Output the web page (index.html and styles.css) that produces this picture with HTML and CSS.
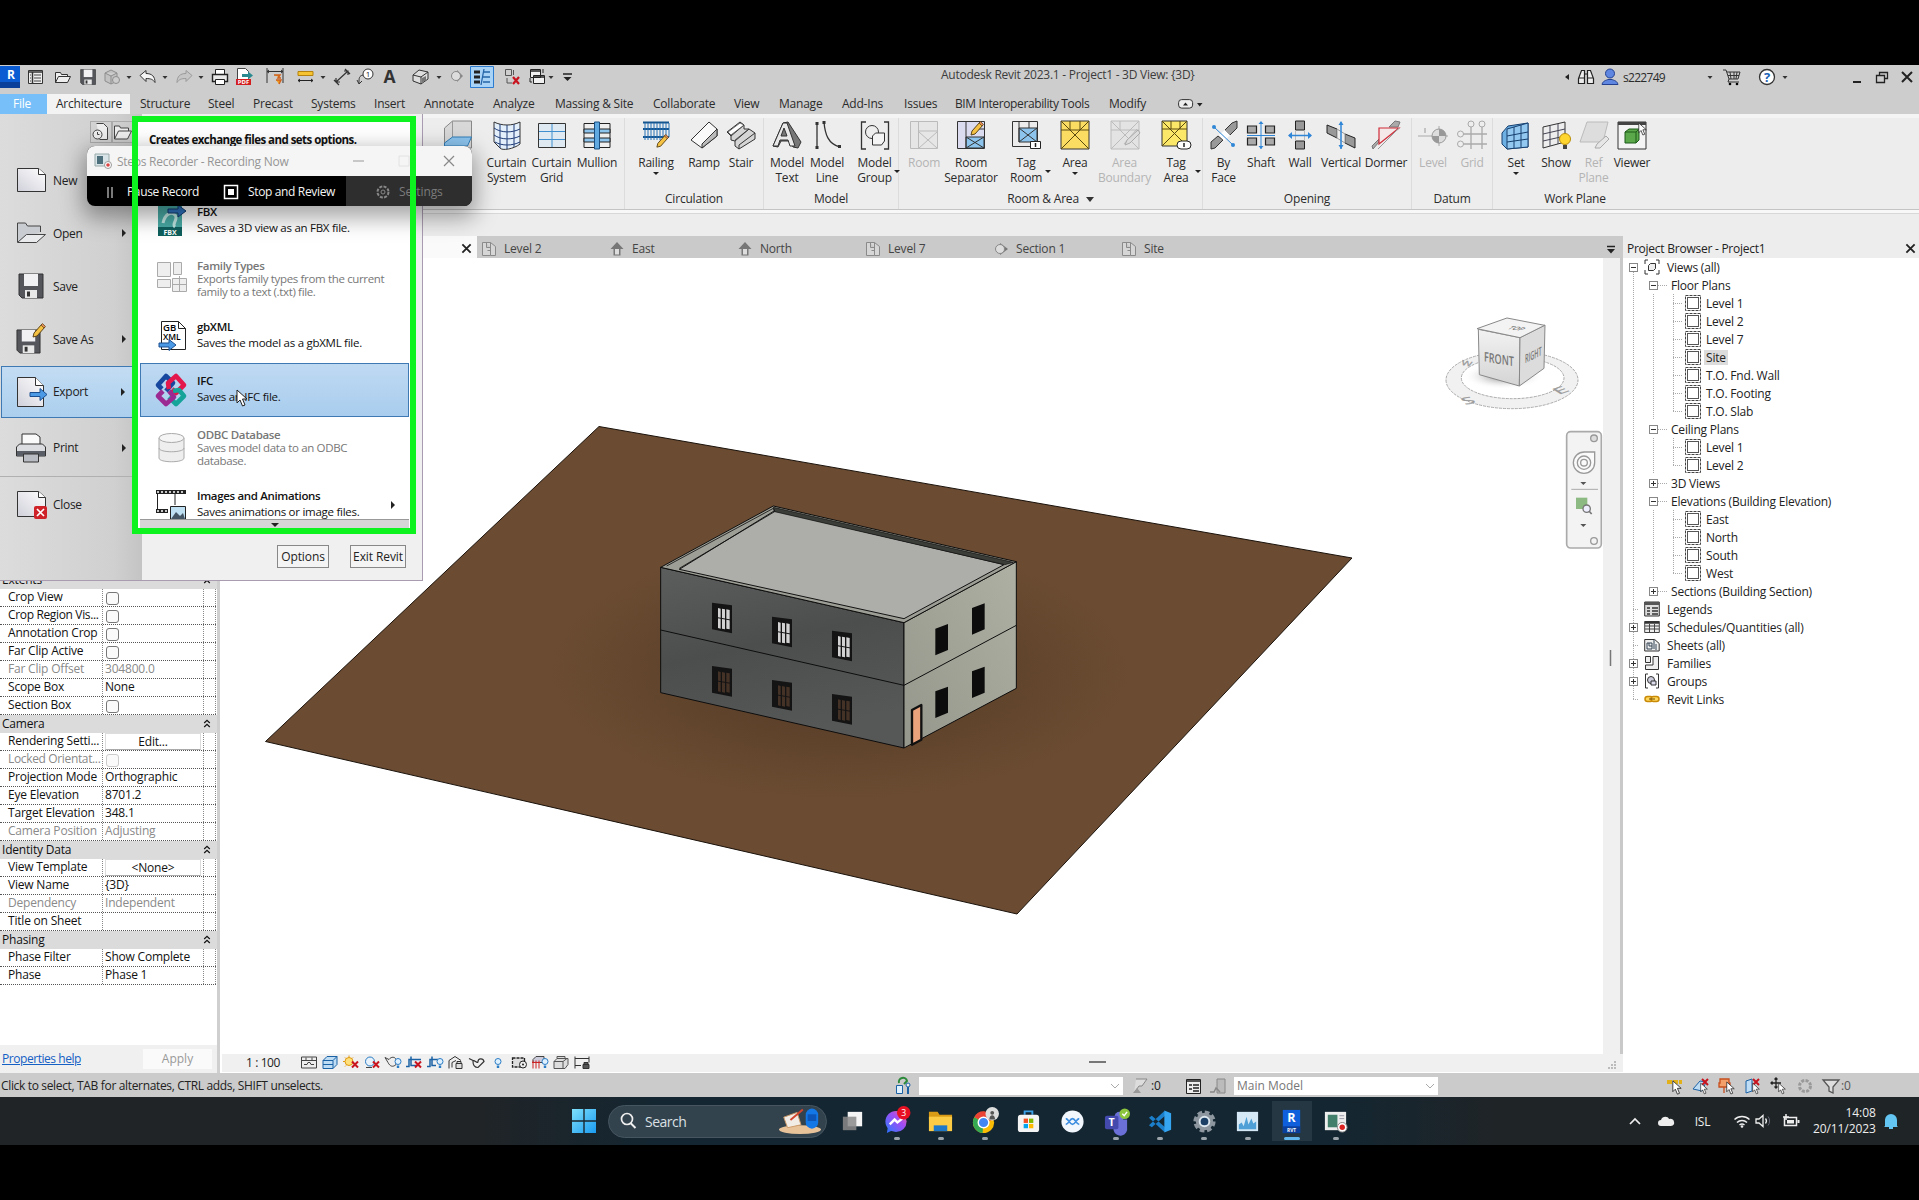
FILE: index.html
```html
<!DOCTYPE html>
<html lang="en">
<head>
<meta charset="utf-8">
<title>Autodesk Revit 2023.1 - Project1 - 3D View: {3D}</title>
<link rel="stylesheet" href="styles.css">
</head>
<body>
<svg class="defs" width="0" height="0">
  <symbol id="caret" viewBox="0 0 8 8"><path d="M1.5 3h5L4 6z" fill="#333"/></symbol>
  <symbol id="plan" viewBox="0 0 16 16"><path d="M1.500 1.500h8v13h-8zM9.500 1.500l5 4v9h-5M5.500 2v4.500h4M9.500 9.500h-3" fill="#d6d6d6" stroke="#8a8a8a"/></symbol>
  <symbol id="house" viewBox="0 0 16 16"><path d="M8 1L1.500 8H4.500v6.500h7V8h3z" fill="#777"/><path d="M6 8h4v5.500H6z" fill="#ddd"/></symbol>
  <symbol id="view" viewBox="0 0 16 16"><rect x=".5" y=".5" width="15" height="15" fill="none" stroke="#444" stroke-dasharray="3 1"/><rect x="2.500" y="2.500" width="11" height="11" fill="#fff" stroke="#555"/></symbol>
  <symbol id="minus" viewBox="0 0 9 9"><rect x=".5" y=".5" width="8" height="8" fill="#fff" stroke="#888"/><path d="M2 4.5h5" stroke="#333"/></symbol>
  <symbol id="plus" viewBox="0 0 9 9"><rect x=".5" y=".5" width="8" height="8" fill="#fff" stroke="#888"/><path d="M2 4.5h5M4.5 2v5" stroke="#333"/></symbol>
  <symbol id="chev" viewBox="0 0 8 9"><path d="M1.2 4L4 1.3 6.800 4M1.200 8L4 5.300 6.800 8" fill="none" stroke="#111" stroke-width="1.200"/></symbol>
  <symbol id="x" viewBox="0 0 12 12"><path d="M1.500 1.500l9 9M10.500 1.500l-9 9" stroke="#222" stroke-width="2"/></symbol>
  <symbol id="redx" viewBox="0 0 8 8"><path d="M1 1l6 6M7 1L1 7" stroke="#c8141e" stroke-width="2"/></symbol>
  <symbol id="pencil" viewBox="0 0 16 16"><path d="M2 14l1-4 8-9 3 3-8 9z" fill="#f6c244" stroke="#5a4318"/><path d="M10 2l3 3 1.500-1.500-3-3z" fill="#e08a55" stroke="#5a4318" stroke-width=".7"/></symbol>
  <symbol id="floppy" viewBox="0 0 26 26"><path d="M1 1h24v24H4l-3-3z" fill="#54565c" stroke="#333"/><path d="M6 1h14v12H6z" fill="#f1f1f4"/><path d="M7 17h12v8H7z" fill="#e8e8e8"/><path d="M9 18.500h3v5H9z" fill="#333"/></symbol>
  <symbol id="ptr" viewBox="0 0 12 18"><path d="M1 1v13l3-3 2.500 6 2.500-1-2.500-6h4.500z" fill="#fff" stroke="#222"/></symbol>
  <symbol id="bulb" viewBox="0 0 8 12"><circle cx="4" cy="4" r="3" fill="#dff0ff" stroke="#2a7cc4"/><path d="M2.800 8h2.400v2.500H2.800z" fill="#2a7cc4"/></symbol>
</svg>

<div class="screen">
  <header class="title">
    <div class="qat">
      <svg class="logo" viewBox="0 0 20 22"><path d="M0 0h20v22H0z" fill="#0b5bd3"/><path d="M0 16h20v6H0z" fill="#0a3f9a"/><text x="11" y="13" font-size="12" font-weight="bold" fill="#fff" text-anchor="middle">R</text></svg>
      <svg viewBox="0 0 22 22"><path d="M4.500 4.500h14v13h-14z" fill="#eee" stroke="#333"/><path d="M4.500 6h14M8.500 6v12" stroke="#333" stroke-width="1.500"/><path d="M10 9h7M10 12h7M10 15h7M6 9h1M6 12h1M6 15h1" stroke="#444"/></svg>
      <svg viewBox="0 0 22 22"><path d="M3.500 16.500v-10h5l1 2h6v2M3.500 16.500l3-6h12l-3 6z" fill="#eee" stroke="#333"/></svg>
      <svg viewBox="0 0 22 22"><g transform="translate(3 3) scale(.62)"><use href="#floppy" width="26" height="26"/></g></svg>
      <svg viewBox="0 0 22 22"><path d="M4 7l6-3 6 3v8l-6 3-6-3zM4 7l6 3 6-3M10 10v8" fill="#c2c2c2" stroke="#8d8d8d"/><circle cx="15" cy="14" r="3.500" fill="#ccc" stroke="#8d8d8d"/></svg>
      <svg class="cr"><use href="#caret"/></svg>
      <svg viewBox="0 0 22 22"><path d="M3 9.500l6-5v3c6 0 9 3 9 9-2-3-4-4-9-4v3z" fill="#f4f4f4" stroke="#333"/></svg>
      <svg class="cr"><use href="#caret"/></svg>
      <svg viewBox="0 0 22 22"><path d="M19 9.500l-6-5v3c-6 0-9 3-9 9 2-3 4-4 9-4v3z" fill="#c6c6c6" stroke="#9a9a9a"/></svg>
      <svg class="cr"><use href="#caret"/></svg>
      <svg viewBox="0 0 22 22"><path d="M6.500 9V3.500h9V9" fill="#fff" stroke="#222"/><path d="M3.500 8.500h15v7h-15z" fill="#e8e8e8" stroke="#222" stroke-width="1.400"/><path d="M6.500 13.500h9v5h-9z" fill="#fff" stroke="#222"/></svg>
      <svg viewBox="0 0 22 22"><path d="M3.500 2.500h8l3 3v12h-11z" fill="#fff" stroke="#444"/><path d="M8 8h6V5.500l5 4-5 4V11H8z" fill="#2b8a8f"/><path d="M2 13h15v6H2z" fill="#d21e1e"/><text x="9.500" y="18.300" font-size="6" font-weight="bold" fill="#fff" text-anchor="middle">PDF</text></svg>
      <svg viewBox="0 0 22 22"><path d="M3 2v15M19 2v15M3 5.500h16M5 4l-2 1.500L5 7M17 4l2 1.500L17 7" fill="none" stroke="#333"/><path d="M10 9h6l-2 3h3M12 14h5l-2 4" fill="#f0a020" stroke="#d0621e" stroke-width="1.500"/></svg>
      <svg viewBox="0 0 22 22"><path d="M3 5.500h15v4H3z" fill="#f7c431" stroke="#b5820f"/><path d="M3 14.500h15M5 13l-2 1.500L5 16M16 13l2 1.500-2 1.500" fill="none" stroke="#222"/></svg>
      <svg class="cr"><use href="#caret"/></svg>
      <svg viewBox="0 0 22 22"><path d="M5 16L17 5M3 14l5 5M14 3l5 5M5 12v4h4M13 5h4v4" fill="none" stroke="#333" stroke-width="1.200"/></svg>
      <svg viewBox="0 0 22 22"><circle cx="13" cy="8" r="5" fill="#fff" stroke="#333"/><text x="13" y="11" font-size="8" text-anchor="middle" fill="#222">1</text><path d="M8 9c-4 1-4 3-4 8M2 14l2 4 3-3" fill="none" stroke="#333"/></svg>
      <svg viewBox="0 0 22 22"><text x="10.500" y="17" font-size="17.500" font-weight="bold" fill="#333" text-anchor="middle">A</text></svg>
      <svg viewBox="0 0 22 22"><path d="M3 9l6-5 9 2v7l-7 5-8-3z" fill="#ddd" stroke="#333"/><path d="M3 9l8 2 7-5M11 11v7" fill="none" stroke="#333"/><path d="M12 12l4-2v4l-4 3z" fill="#777"/></svg>
      <svg class="cr"><use href="#caret"/></svg>
      <svg viewBox="0 0 22 22"><path d="M12 4l6 6-6 6z" fill="#888"/><circle cx="11" cy="10" r="4.500" fill="#ddd" stroke="#888"/></svg>
      <svg class="on" viewBox="0 0 24 22"><path d="M.5.5h23v21H.5z" fill="#a9d2f7" stroke="#2b7bd0"/><path d="M4 6h6M4 11h6M4 16h6" stroke="#222" stroke-width="3"/><path d="M13 6h7M13 11h7M13 16h7M14 3l-3 16" stroke="#2565a8" stroke-width="1.300"/></svg>
      <svg viewBox="0 0 22 22"><path d="M4.500 3.500h6v6h-6zM12.500 4v5M6 12v5h5" fill="none" stroke="#555"/><path d="M12 11l6 7M18 11l-6 7" stroke="#c8141e" stroke-width="2.200"/></svg>
      <svg viewBox="0 0 22 22"><path d="M4.500 3.500h10v8h-10zM7.500 9.500h11v8h-11z" fill="#f0f0f0" stroke="#222"/><path d="M4.500 5h10M7.500 11h11" stroke="#222" stroke-width="1.600"/><path d="M4 12v4h2M17 3v4" fill="none" stroke="#222"/></svg>
      <svg class="cr"><use href="#caret"/></svg>
      <svg class="q" viewBox="0 0 16 22"><path d="M3 8h9" stroke="#222" stroke-width="1.500"/><path d="M3.500 11h8l-4 4z" fill="#222"/></svg>
    </div>
    <div class="wtitle">Autodesk Revit 2023.1 - Project1 - 3D View: {3D}</div>
    <div class="tools">
      <svg viewBox="0 0 22 22"><path d="M13 8v6l-4-3z" fill="#222"/></svg>
      <svg viewBox="0 0 22 22"><path d="M3.500 17.500v-5l3-8h3v13zM18.500 17.500v-5l-3-8h-3v13zM9.500 8h3M3.500 12h6M12.500 12h6" fill="#eee" stroke="#222" stroke-width="1.200"/></svg>
      <svg viewBox="0 0 22 22"><circle cx="11" cy="7.500" r="4.500" fill="#5f86e0" stroke="#23418e"/><path d="M3 18.500c1-4 4-4 6-5h4c2 1 5 1 6 5z" fill="#5f86e0" stroke="#23418e"/></svg>
      <span>s222749</span>
      <svg class="cr"><use href="#caret"/></svg>
      <svg viewBox="0 0 22 22"><path d="M2 4h3l3 9h9l2-7H6M8 13l-1 3h11M9 6l1 7M13 6v7M16 6l-1 7M7 9.500h11" fill="none" stroke="#333"/><circle cx="9" cy="18" r="1.300"/><circle cx="16" cy="18" r="1.300"/></svg>
      <svg viewBox="0 0 22 22"><circle cx="11" cy="11" r="7.500" fill="#fff" stroke="#333" stroke-width="1.300"/><text x="11" y="15.500" font-size="13" font-weight="bold" fill="#1b62b5" text-anchor="middle">?</text></svg>
      <svg class="cr"><use href="#caret"/></svg>
      <svg viewBox="0 0 22 22"><path d="M7 16h8" stroke="#222" stroke-width="2"/></svg>
      <svg viewBox="0 0 22 22"><path d="M8.500 9V6.500h8v6H14M5.500 9.500h8v7h-8z" fill="none" stroke="#222" stroke-width="1.300"/></svg>
      <svg viewBox="0 0 22 22"><path d="M6 6l10 10M16 6L6 16" stroke="#222" stroke-width="2"/></svg>
    </div>
  </header>

  <nav class="tabs">
    <span class="file">File</span><span class="act">Architecture</span><span>Structure</span><span>Steel</span><span>Precast</span><span>Systems</span><span>Insert</span><span>Annotate</span><span>Analyze</span><span>Massing &amp; Site</span><span>Collaborate</span><span>View</span><span>Manage</span><span>Add-Ins</span><span>Issues</span><span class="bim">BIM Interoperability Tools</span><span>Modify</span>
    <svg viewBox="0 0 26 12" width="26" height="12"><rect x=".6" y="1.600" width="14" height="8.500" rx="3" fill="#eee" stroke="#333"/><path d="M5 7.500h5L7.500 4.500zM19 5h5.500l-2.750 3.500z" fill="#222"/></svg>
  </nav>

  <section class="ribbon">
    <div class="panel p0"><div class="items">
      <div class="it"><svg viewBox="0 0 30 30"><path d="M1.500 8l8-7h19v27h-19l-8-2z" fill="#d8d8d8" stroke="#888"/><path d="M9.500 1v18" stroke="#999"/><path d="M1.500 23l8-6h19l-4 9H1.500z" fill="#8cc4ee" stroke="#2f7db8"/></svg></div>
      <div class="it"><svg viewBox="0 0 30 30"><path d="M2 2c8 4 18 4 26 0v22c-6 5-18 7-20 4L2 22z" fill="#e3effa" stroke="#333"/><path d="M2 8c7 5 18 5 26 1M2 15c7 5 18 5 26 1M3 22c7 4 17 4 25 0M8 4v24M15 5v24M22 4v23" fill="none" stroke="#1f3c78"/></svg>Curtain<br>System</div>
      <div class="it"><svg viewBox="0 0 30 30"><path d="M1.500 3.500h27v24h-27z" fill="#dfe9f2" stroke="#333"/><path d="M2 11.500h26M2 19.500h26M15 4v23" stroke="#3f8fd0"/></svg>Curtain<br>Grid</div>
      <div class="it"><svg viewBox="0 0 30 30"><path d="M2 3.500h26v24H2z" fill="#eee" stroke="#222"/><path d="M2 9h26v4H2zM2 18h26v4H2z" fill="#8cc4ee" stroke="#222"/><path d="M12.500 2h5v27h-5z" fill="#5fa8e0" stroke="#1b4e80"/></svg>Mullion</div>
    </div><div class="ptitle"></div></div>
    <div class="panel p1"><div class="items">
      <div class="it"><svg viewBox="0 0 30 30"><path d="M2 2.500h26M2 9h26M2 17h26" stroke="#14548f" stroke-width="2"/><path d="M4 3v17M7 3v17M10 3v17M13 3v17M16 3v17M19 3v17M22 3v14M25 3v14M28 3v14" stroke="#2471b5"/><use href="#pencil" x="14" y="14" width="15" height="15"/></svg>Railing<br><i class="dn"></i></div>
      <div class="it"><svg viewBox="0 0 30 30"><path d="M2 20L20 2l8 7v7L13 28z" fill="#fafafa" stroke="#333"/><path d="M13 28v-4L28 9v7z" fill="#bbb" stroke="#333"/></svg>Ramp</div>
      <div class="it"><svg viewBox="0 0 30 30"><path d="M1 12L14 2l4 3v4l5 0 6 4v6L13 29l-4-3v-5l-4-1v-4z" fill="#d5d5d5" stroke="#333"/><path d="M5 16L18 5M9 21l14-12M13 25L29 13M13 25v4" stroke="#333"/><path d="M2 12L14 3l4 2L5 15zM9 20l14-11" fill="#fff" stroke="#333" stroke-width=".7"/></svg>Stair</div>
    </div><div class="ptitle">Circulation</div></div>
    <div class="panel p2"><div class="items">
      <div class="it"><svg viewBox="0 0 30 30"><path d="M1 26L11 3l5-1 13 20-3 6-5-1-3-6H9l-3 6z" fill="#777" stroke="#333"/><path d="M1 26L11 3h4l8 23h-5l-2-6H8l-2 6zM9 16h6l-3-8z" fill="#e9e9e9" stroke="#333"/></svg>Model<br>Text</div>
      <div class="it"><svg viewBox="0 0 30 30"><path d="M5 3v25M12 2c1 12 4 22 16 25" fill="none" stroke="#333" stroke-width="1.300"/><path d="M3.500 2h3v3h-3zM3.500 26h3v3h-3zM10.500 1h3v3h-3zM26 25h3v3h-3z" fill="#333"/></svg>Model<br>Line</div>
      <div class="it"><svg viewBox="0 0 30 30"><path d="M6 2H1.500v27H6M24 2h4.500v27H24" fill="none" stroke="#333" stroke-width="1.300"/><circle cx="12" cy="12" r="6.500" fill="#eee" stroke="#333"/><path d="M12.500 16l3-3h9v8l-3 4h-9z" fill="#f4f4f4" stroke="#333"/></svg>Model<br>Group<b class="sd"></b></div>
    </div><div class="ptitle">Model</div></div>
    <div class="panel p3"><div class="items">
      <div class="it off"><svg viewBox="0 0 30 30"><path d="M1.500 1.500h27v27h-27zM9.500 1.500v27M9.500 11h19M10 12l18 16M28 12L10 28" fill="#e6e6e6" stroke="#bbb"/></svg>Room</div>
      <div class="it"><svg viewBox="0 0 30 30"><path d="M1.500 1.500h27v27h-27z" fill="#dcdcf0" stroke="#333"/><path d="M10 17h18v11H10z" fill="#8cc4ee" stroke="#333"/><path d="M10 2v26M10 17l18 11M28 17L10 28M18 9h10" stroke="#333"/><use href="#pencil" x="13" y="1" width="16" height="16"/></svg>Room<br>Separator</div>
      <div class="it"><svg viewBox="0 0 30 30"><path d="M1.500 1.500h25v25h-25z" fill="#ececec" stroke="#333"/><path d="M8 8h18v14H8z" fill="#8cc4ee" stroke="#333"/><path d="M8 1v21M8 8l18 14M26 8L8 22M18 1v7" stroke="#333"/><path d="M19.500 21.500h10v7h-10z" fill="#fff" stroke="#222"/><path d="M24.500 23v4" stroke="#222" stroke-width="1.500"/></svg>Tag<br>Room<b class="sd"></b></div>
      <div class="it"><svg viewBox="0 0 30 30"><path d="M1 1h28v28H1z" fill="#fbdc62" stroke="#333"/><path d="M1 1l28 28M29 1L1 29M1 10h28M10 1v9M20 1v9" stroke="#5a4a10"/></svg>Area<br><i class="dn"></i></div>
      <div class="it off"><svg viewBox="0 0 30 30"><path d="M1 1h28v28H1z" fill="#e3e3e3" stroke="#bbb"/><path d="M1 1l28 28M29 1L1 29M1 10h28M10 1v9M27 9L14 24" stroke="#bbb"/><path d="M15 25l2-5 11-10 2 3-10 10z" fill="#ddd" stroke="#aaa"/></svg>Area<br>Boundary</div>
      <div class="it"><svg viewBox="0 0 30 30"><path d="M1 1h25v25H1z" fill="#fbe768" stroke="#333"/><path d="M1 1l25 25M26 1L1 26M1 9h25M10 1v8M19 1v8" stroke="#5a4a10"/><rect x="16" y="21" width="14" height="8" rx="4" fill="#fff" stroke="#222"/><path d="M23 23v4" stroke="#222" stroke-width="1.500"/></svg>Tag<br>Area<b class="sd"></b></div>
    </div><div class="ptitle">Room &amp; Area&nbsp; <svg width="8" height="8" viewBox="0 0 8 8"><path d="M0 2h8L4 7z" fill="#333"/></svg></div></div>
    <div class="panel p4"><div class="items">
      <div class="it"><svg viewBox="0 0 30 30"><path d="M16 10l7-7 5-2v7l-7 7zM2 22l7-6 5 4-8 8-4 1z" fill="#999" stroke="#333"/><path d="M10 15l6-5 5 5-6 6z" fill="#fff"/><path d="M5 7l19 18" stroke="#2f86d6"/><circle cx="5" cy="7" r="2" fill="#2f86d6"/><circle cx="24" cy="25" r="2" fill="#2f86d6"/></svg>By<br>Face</div>
      <div class="it"><svg viewBox="0 0 30 30"><path d="M1.500 6h9v7h-9zM19.500 6h9v7h-9zM1.500 18h9v7h-9zM19.500 18h9v7h-9z" fill="#aaa" stroke="#222" stroke-width="1.200"/><path d="M15 2v27M1 15.500h28" stroke="#2f86d6"/><path d="M12.500 4L15 1l2.500 3zM12.500 26l2.500 3 2.500-3z" fill="#2f86d6"/></svg>Shaft</div>
      <div class="it"><svg viewBox="0 0 30 30"><path d="M10.500 1h9v9h-9zM10.500 21h9v8h-9z" fill="#999" stroke="#222"/><path d="M10.500 10v11M19.500 10v11" stroke="#bbb"/><path d="M4 15.500h22" stroke="#2f86d6" stroke-width="1.500"/><path d="M7 12l-4 3.500L7 19zM23 12l4 3.500-4 3.500z" fill="#2f86d6"/></svg>Wall</div>
      <div class="it"><svg viewBox="0 0 30 30"><path d="M1 5l10 4v9L1 13zM19 14l10 4v10l-10-5z" fill="#999" stroke="#222"/><path d="M11 9l8 5v9l-8-5z" fill="#eee" stroke="#999"/><path d="M15 2v27" stroke="#2f86d6" stroke-width="1.500"/><path d="M12.500 5L15 1l2.500 4zM12.500 25l2.500 4 2.500-4z" fill="#2f86d6"/></svg>Vertical</div>
      <div class="it"><svg viewBox="0 0 30 30"><path d="M18 7l6-6 5 1-2 5zM1 26l7-7v3l-6 7z" fill="#aaa" stroke="#777"/><path d="M8 24V8h20z" fill="#f4e8e8" stroke="#cf2b37" stroke-width="1.200"/><path d="M28 8L7 29" stroke="#999"/></svg>Dormer</div>
    </div><div class="ptitle">Opening</div></div>
    <div class="panel p5"><div class="items">
      <div class="it off"><svg viewBox="0 0 30 30"><path d="M0 16h30M21 6v20" stroke="#aaa"/><circle cx="21" cy="16" r="7" fill="#ddd" stroke="#999"/><path d="M21 16V9a7 7 0 017 7zM21 16v7a7 7 0 01-7-7z" fill="#999"/><path d="M7 8v5" stroke="#999"/></svg>Level</div>
      <div class="it off"><svg viewBox="0 0 30 30"><path d="M4 14h26M4 24h26M14 7v22M25 7v22" stroke="#aaa" stroke-width="1.300"/><g fill="#eee" stroke="#aaa"><circle cx="14" cy="4" r="3"/><circle cx="25" cy="4" r="3"/><circle cx="3.500" cy="14" r="3"/><circle cx="3.500" cy="24" r="3"/></g></svg>Grid</div>
    </div><div class="ptitle">Datum</div></div>
    <div class="panel p6"><div class="items">
      <div class="it"><svg viewBox="0 0 30 30"><path d="M1 13l6-7 20-3v24L6 29l-5-5z" fill="#6db0e4" stroke="#163f6e"/><path d="M6 9l21-6v24L6 29z" fill="#93c9f1" stroke="#163f6e"/><path d="M6 16l21-4M6 22l21-3M13 7v21M20 5v22" stroke="#163f6e"/></svg>Set<br><i class="dn"></i></div>
      <div class="it"><svg viewBox="0 0 30 30"><path d="M2 7l22-5v20L2 28z" fill="#eee" stroke="#333"/><path d="M2 14l22-5M2 21l22-5M9 6v20M17 4v20" stroke="#445"/><circle cx="24" cy="19" r="5.500" fill="#ffd530" stroke="#b98d0a"/><path d="M22 25h4v4h-4z" fill="#444"/></svg>Show</div>
      <div class="it off"><svg viewBox="0 0 30 30"><path d="M8 2h21l-5 20H1z" fill="#ddd" stroke="#bbb"/><path d="M16 28l2-4 9-8 3 3-9 9z" fill="#e6e6e6" stroke="#aaa"/></svg>Ref<br>Plane</div>
      <div class="it"><svg viewBox="0 0 30 30"><path d="M1 2h28v27H1z" fill="#f4f4f4" stroke="#333"/><path d="M1 2h28v3H1z" fill="#444"/><path d="M8 12l4-3h10v11l-3 3H8z" fill="#5aa84a" stroke="#1d5a18"/><path d="M8 12h11v11M19 12l3-3" fill="none" stroke="#1d5a18"/><use href="#ptr" x="21" y="2" width="9" height="14"/></svg>Viewer</div>
    </div><div class="ptitle">Work Plane</div></div>
  </section>
  <div class="options"></div>

  <main class="main">
    <aside class="props">
      <div class="fill"></div>
      <div class="ph">Extents<svg><use href="#chev"/></svg></div>
      <div class="pr"><span>Crop View</span><span><i class="cb"></i></span><span></span></div>
      <div class="pr tight"><span>Crop Region Vis...</span><span><i class="cb"></i></span><span></span></div>
      <div class="pr"><span>Annotation Crop</span><span><i class="cb"></i></span><span></span></div>
      <div class="pr"><span>Far Clip Active</span><span><i class="cb"></i></span><span></span></div>
      <div class="pr dim"><span>Far Clip Offset</span><span>304800.0</span><span></span></div>
      <div class="pr"><span>Scope Box</span><span>None</span><span></span></div>
      <div class="pr"><span>Section Box</span><span><i class="cb"></i></span><span></span></div>
      <div class="ph">Camera<svg><use href="#chev"/></svg></div>
      <div class="pr"><span>Rendering Setti...</span><span><i class="btn">Edit...</i></span><span></span></div>
      <div class="pr dim tight"><span>Locked Orientat...</span><span><i class="cb"></i></span><span></span></div>
      <div class="pr"><span>Projection Mode</span><span>Orthographic</span><span></span></div>
      <div class="pr"><span>Eye Elevation</span><span>8701.2</span><span></span></div>
      <div class="pr"><span>Target Elevation</span><span>348.1</span><span></span></div>
      <div class="pr dim"><span>Camera Position</span><span>Adjusting</span><span></span></div>
      <div class="ph">Identity Data<svg><use href="#chev"/></svg></div>
      <div class="pr"><span>View Template</span><span><i class="btn">&lt;None&gt;</i></span><span></span></div>
      <div class="pr"><span>View Name</span><span>{3D}</span><span></span></div>
      <div class="pr dim"><span>Dependency</span><span>Independent</span><span></span></div>
      <div class="pr"><span>Title on Sheet</span><span></span><span></span></div>
      <div class="ph">Phasing<svg><use href="#chev"/></svg></div>
      <div class="pr"><span>Phase Filter</span><span>Show Complete</span><span></span></div>
      <div class="pr"><span>Phase</span><span>Phase 1</span><span></span></div>
      <div class="pfoot"><a>Properties help</a><span>Apply</span></div>
    </aside>

    <section class="view">
      <div class="vtabs">
        <div class="cur"><svg><use href="#x"/></svg></div>
        <div><svg><use href="#plan"/></svg>Level 2</div>
        <div><svg><use href="#house"/></svg>East</div>
        <div><svg><use href="#house"/></svg>North</div>
        <div><svg><use href="#plan"/></svg>Level 7</div>
        <div><svg viewBox="0 0 16 16"><path d="M7 2l8 6-8 6z" fill="#777"/><circle cx="7" cy="8" r="4.500" fill="#ddd" stroke="#888"/></svg>Section 1</div>
        <div><svg><use href="#plan"/></svg>Site</div>
        <svg class="more" viewBox="0 0 10 10"><path d="M1 1.500h8" stroke="#222" stroke-width="1.500"/><path d="M1 4h8L5 8.500z" fill="#222"/></svg>
      </div>
      <svg class="canvas" viewBox="220 258 1403 796" width="1403" height="796">
        <defs>
          <radialGradient id="gr" gradientUnits="userSpaceOnUse" cx="0" cy="0" r="1" gradientTransform="translate(840 670) scale(290 130)"><stop offset="0" stop-color="#543823"/><stop offset=".6" stop-color="#61442c"/><stop offset="1" stop-color="#6b4c33"/></radialGradient>
          <linearGradient id="wl" x1="0" y1="0" x2=".3" y2="1"><stop offset="0" stop-color="#5c5e5e"/><stop offset=".5" stop-color="#4c4d4d"/><stop offset="1" stop-color="#565757"/></linearGradient>
          <linearGradient id="wr" x1="0" y1="1" x2="1" y2="0"><stop offset="0" stop-color="#95978c"/><stop offset="1" stop-color="#aeb0a3"/></linearGradient>
          <linearGradient id="cf" x1="0" y1="0" x2="0" y2="1"><stop offset="0" stop-color="#f2f2f2"/><stop offset="1" stop-color="#d4d4d4"/></linearGradient>
          <radialGradient id="cs"><stop offset="0" stop-color="#777"/><stop offset="1" stop-color="#fff" stop-opacity="0"/></radialGradient>
          <g id="win"><path d="M0 0l60 8v84L0 80z" fill="#141414"/></g>
          <g id="panes"><path d="M18 16l8 2v60l-8-2zM30 18l9 2v60l-9-2zM43 20l10 2v58l-10-2z"/><path d="M16 45l40 7" stroke="#141414" stroke-width="3"/></g>
          <path id="rwin" d="M0 14L38 0v78L0 94z" fill="#0c0c0c"/>
        </defs>
        <path d="M599 426.500L1352 558l-335 356L265.500 741.500z" fill="url(#gr)" stroke="#1a120b"/>
        <g transform="translate(640 480) scale(.33333)" stroke-linejoin="round">
          <path d="M62 262L792 428v376L62 638z" fill="url(#wl)" stroke="#0d0d0d" stroke-width="3"/>
          <path d="M792 428l337-183v380L792 804z" fill="url(#wr)" stroke="#0d0d0d" stroke-width="3"/>
          <path d="M62 262L400 78l729 167-337 183z" fill="#9d9f96" stroke="#0d0d0d" stroke-width="3"/>
          <path d="M404 92l688 162-300 162L118 268z" fill="#adaea9" stroke="#111" stroke-width="3"/>
          <path d="M400 82l720 165-26 7L404 95z" fill="#3a3d38" stroke="#111" stroke-width="2"/>
          <path d="M80 258L400 85l4 10-286 170" fill="none" stroke="#111" stroke-width="2.500"/>
          <path d="M62 450l730 166 337-180" fill="none" stroke="#0d0d0d" stroke-width="3"/>
          <g fill="#d2d2d2"><use href="#win" x="216" y="368"/><use href="#panes" x="216" y="368"/><use href="#win" x="396" y="410"/><use href="#panes" x="396" y="410"/><use href="#win" x="576" y="452"/><use href="#panes" x="576" y="452"/></g>
          <g fill="#453226"><use href="#win" x="216" y="558"/><use href="#panes" x="216" y="558"/><use href="#win" x="396" y="600"/><use href="#panes" x="396" y="600"/><use href="#win" x="576" y="642"/><use href="#panes" x="576" y="642"/></g>
          <use href="#rwin" x="886" y="432"/><use href="#rwin" x="996" y="370"/><use href="#rwin" x="886" y="620"/><use href="#rwin" x="996" y="560"/>
          <path d="M816 690l28-15v104l-28 15z" fill="#e9a27c" stroke="#111" stroke-width="7"/>
        </g>
        <path d="M1603 258h17v796h-17z" fill="#f0f0f0"/><path d="M1620 258h3v796h-3z" fill="#c9c9c9"/>
        <path d="M1610.500 650v16" stroke="#777" stroke-width="1.500"/>
        <g transform="translate(1400 240) scale(.33333)">
          <path fill-rule="evenodd" d="M138 420a198 86 0 10396 0a198 86 0 10-396 0M184 414a154 62 0 10308 0a154 62 0 10-308 0" fill="#f1f1f1" stroke="#aaa" stroke-width="3" stroke-dasharray="9 3"/>
          <ellipse cx="310" cy="408" rx="120" ry="40" fill="url(#cs)"/>
          <path d="M235 268l125 25-2 145-120-34z" fill="url(#cf)" stroke="#888" stroke-width="3"/>
          <path d="M360 293l75-38-3 130-74 53z" fill="#dcdcdc" stroke="#888" stroke-width="3"/>
          <path d="M231 266l90-32 113 22-74 37z" fill="#f3f3f3" stroke="#888" stroke-width="3"/>
          <g fill="#777" font-weight="600"><text transform="matrix(1 .17 0 1 252 364)" font-size="40" textLength="90" lengthAdjust="spacingAndGlyphs">FRONT</text>
          <text transform="matrix(1 -.5 0 1 375 370)" font-size="36" textLength="50" lengthAdjust="spacingAndGlyphs">RIGHT</text>
          <text transform="matrix(1 .12 -.8 .45 320 267)" font-size="28" textLength="44" lengthAdjust="spacingAndGlyphs">TOP</text></g>
          <g fill="#999" stroke="#999" stroke-width="1"><text transform="matrix(1.500 -.3 .6 .6 196 494)" font-size="42">S</text><text transform="matrix(1.500 -.5 .8 .5 476 464)" font-size="42">E</text><text transform="matrix(1 .2 -.2 .6 182 374)" font-size="34">W</text></g>
          <rect x="500" y="575" width="104" height="349" rx="12" fill="#f3f3f3" stroke="#aaa" stroke-width="5"/>
          <g fill="none" stroke="#999" stroke-width="4"><circle cx="582" cy="595" r="10" fill="#ddd"/><circle cx="582" cy="903" r="10"/><path d="M520 668a33 33 0 0133-32h31v32a32 32 0 01-64 0z" fill="#fafafa"/><circle cx="552" cy="668" r="20"/><circle cx="552" cy="668" r="10"/></g>
          <path d="M514 748h80" stroke="#aaa" stroke-width="3"/><path d="M541 726h18l-9 9zM541 852h18l-9 9z" fill="#555"/>
          <path d="M528 773h34v34h-34z" fill="#8cba82"/><circle cx="560" cy="806" r="11" fill="#eef" stroke="#777" stroke-width="4"/><path d="M567 813l8 9" stroke="#777" stroke-width="5"/>
        </g>
      </svg>
      <div class="vbar"><span>1 : 100</span>
        <svg viewBox="0 0 18 14"><path d="M1.500 1.500h15v11h-15zM2 5h14M6 5V2M12 5V2M4 9h3l1-2 2 0 1 2h3" fill="#eee" stroke="#444"/></svg>
        <svg viewBox="0 0 18 14"><path d="M2 5l4-4h10v8l-4 4H2z" fill="#bfdcf5" stroke="#1b62a5"/><path d="M2 5h10v8M12 5l4-4M2 9h10" fill="none" stroke="#1b62a5"/></svg>
        <svg viewBox="0 0 18 14"><circle cx="7" cy="6" r="4" fill="#ffe07a" stroke="#e09a12"/><path d="M7 0v2M1 6h2M3 2l1 1M11 2l-1 1M3 11l1-1" stroke="#e09a12"/><use href="#redx" x="9" y="5" width="8" height="8"/></svg>
        <svg viewBox="0 0 18 14"><circle cx="7" cy="6" r="4.500" fill="#e8f2fb" stroke="#2a7cc4"/><path d="M3 12h6" stroke="#444"/><use href="#redx" x="9" y="5" width="8" height="8"/></svg>
        <svg viewBox="0 0 18 14"><path d="M1 2l4 2c2-3 6-3 7 0v5c-3 3-6 2-8-2z" fill="#eee" stroke="#444"/><use href="#bulb" x="10" y="2" width="8" height="12"/></svg>
        <svg viewBox="0 0 18 14"><path d="M1 11h3V4h12M6 1v9h6" fill="none" stroke="#1b62a5" stroke-width="1.500"/><use href="#redx" x="9" y="5" width="8" height="8"/></svg>
        <svg viewBox="0 0 18 14"><path d="M1 11h3V4h8M6 1v9h4" fill="none" stroke="#1b62a5" stroke-width="1.500"/><use href="#bulb" x="10" y="2" width="8" height="12"/></svg>
        <svg viewBox="0 0 18 14"><path d="M2 13V5l6-4 6 4M5 12V7l4-2" fill="none" stroke="#333"/><path d="M9 8h6v5H9zM10 8V6h4v2" fill="#ddd" stroke="#333"/></svg>
        <svg viewBox="0 0 18 14"><path d="M1 3l4 2M5 6c0-3 5 3 5 0s5-4 6 0l-6 6c-3 0-5-2-5-6z" fill="none" stroke="#333" stroke-width="1.200"/></svg>
        <svg viewBox="0 0 18 14"><use href="#bulb" x="5" y="2" width="8" height="12"/></svg>
        <svg viewBox="0 0 18 14"><path d="M2.500 2.500h12v9h-12z" fill="#ddd" stroke="#222" stroke-width="1.300" stroke-dasharray="3 1"/><circle cx="13" cy="9" r="3.500" fill="#eee" stroke="#222"/><circle cx="13" cy="9" r="1" fill="#222"/></svg>
        <svg viewBox="0 0 18 14"><path d="M2 4l3-3h8v6H2z" fill="#ccd" stroke="#444"/><path d="M1 7h8M2 5v8M5 5v8M8 5v8" stroke="#c22"/><use href="#bulb" x="10" y="2" width="8" height="12"/></svg>
        <svg viewBox="0 0 18 14"><path d="M2 6l3-3h11v6l-3 4H2zM5 3V1h8v2M2 6h9v7M11 6l4-3" fill="#ddd" stroke="#555"/></svg>
        <svg viewBox="0 0 18 14"><path d="M2 1v12M16 1v6M2 3h14M2 10h6" stroke="#333"/><path d="M10 9h6v4h-6zM11 9V7h4v2" fill="#555" stroke="#333"/></svg>
        <i class="dash"></i>
        <svg class="grip" viewBox="0 0 10 10"><path d="M7 1h2v2H7zM4 4h2v2H4zM7 4h2v2H7zM1 7h2v2H1zM4 7h2v2H4zM7 7h2v2H7z" fill="#bbb"/></svg>
      </div>
    </section>

    <aside class="browser">
      <div class="bh">Project Browser - Project1<svg><use href="#x"/></svg></div>
      <div class="tree">
        <div class="r a"><svg class="t"><use href="#minus"/></svg><svg class="ic" viewBox="0 0 16 16"><path d="M4 1H1v4M12 1h3v4M4 15H1v-4M12 15h3v-4" fill="none" stroke="#333"/><path d="M4.500 6.500l2-2h5v5l-2 2h-5z" fill="#eee" stroke="#333"/></svg>Views (all)</div>
        <div class="r b"><svg class="t"><use href="#minus"/></svg>Floor Plans</div>
        <div class="r c"><svg class="ic"><use href="#view"/></svg><span>Level 1</span></div>
        <div class="r c"><svg class="ic"><use href="#view"/></svg><span>Level 2</span></div>
        <div class="r c"><svg class="ic"><use href="#view"/></svg><span>Level 7</span></div>
        <div class="r c"><svg class="ic"><use href="#view"/></svg><span class="sel">Site</span></div>
        <div class="r c"><svg class="ic"><use href="#view"/></svg><span>T.O. Fnd. Wall</span></div>
        <div class="r c"><svg class="ic"><use href="#view"/></svg><span>T.O. Footing</span></div>
        <div class="r c end"><svg class="ic"><use href="#view"/></svg><span>T.O. Slab</span></div>
        <div class="r b"><svg class="t"><use href="#minus"/></svg>Ceiling Plans</div>
        <div class="r c"><svg class="ic"><use href="#view"/></svg><span>Level 1</span></div>
        <div class="r c end"><svg class="ic"><use href="#view"/></svg><span>Level 2</span></div>
        <div class="r b"><svg class="t"><use href="#plus"/></svg>3D Views</div>
        <div class="r b"><svg class="t"><use href="#minus"/></svg>Elevations (Building Elevation)</div>
        <div class="r c"><svg class="ic"><use href="#view"/></svg><span>East</span></div>
        <div class="r c"><svg class="ic"><use href="#view"/></svg><span>North</span></div>
        <div class="r c"><svg class="ic"><use href="#view"/></svg><span>South</span></div>
        <div class="r c end"><svg class="ic"><use href="#view"/></svg><span>West</span></div>
        <div class="r b"><svg class="t"><use href="#plus"/></svg>Sections (Building Section)</div>
        <div class="r a"><i class="t"></i><svg class="ic" viewBox="0 0 16 16"><path d="M.7 1h14.600v14H.7z" fill="#ddd" stroke="#333"/><path d="M1 2.500h14" stroke="#555" stroke-width="3"/><path d="M3 7h3M3 10h3M3 13h3M8 7h6M8 10h6M8 13h6" stroke="#333" stroke-width="1.500"/></svg>Legends</div>
        <div class="r a"><svg class="t"><use href="#plus"/></svg><svg class="ic" viewBox="0 0 16 16"><path d="M.7 2.500h14.600v11H.7zM1 7h14M1 10h14M5.500 5v8M10.500 5v8" fill="#eee" stroke="#444"/><path d="M.7 3.500h14.600" stroke="#333" stroke-width="2.500"/></svg>Schedules/Quantities (all)</div>
        <div class="r a"><i class="t"></i><svg class="ic" viewBox="0 0 16 16"><path d="M.7 2.500h10l4.500 4v7.500H.7z" fill="#eee" stroke="#333"/><path d="M3 6h5v6H3zM10 3v9M12 7v6M5 6v3h3" fill="none" stroke="#345"/></svg>Sheets (all)</div>
        <div class="r a"><svg class="t"><use href="#plus"/></svg><svg class="ic" viewBox="0 0 16 16"><path d="M1.500 1.500h5v6h-5zM9 1.500h5.500v13h-13V10H9z" fill="#eee" stroke="#333"/></svg>Families</div>
        <div class="r a"><svg class="t"><use href="#plus"/></svg><svg class="ic" viewBox="0 0 16 16"><path d="M4 1H1.500v14H4M12 1h2.500v14H12" fill="none" stroke="#333"/><circle cx="7" cy="7" r="3.500" fill="#ccd" stroke="#333"/><path d="M7 8h5v4H7z" fill="#dde" stroke="#333"/></svg>Groups</div>
        <div class="r a"><i class="t"></i><svg class="ic" viewBox="0 0 16 16"><g fill="#ffd75a" stroke="#c98a08" stroke-width="1.500"><rect x="1" y="5.500" width="8" height="5" rx="2.500"/><rect x="7" y="5.500" width="8" height="5" rx="2.500"/></g><path d="M5 8h6" stroke="#6b4a08"/></svg>Revit Links</div>
      </div>
    </aside>
  </main>

  <footer class="status">
    <span class="msg">Click to select, TAB for alternates, CTRL adds, SHIFT unselects.</span>
    <svg viewBox="0 0 18 18"><path d="M2.500 8.500h6v8h-6z" fill="#dff0ff" stroke="#1b62a5"/><path d="M5 6a4 4 0 018-2l-3 3" fill="none" stroke="#2b8a3a" stroke-width="2"/><circle cx="14" cy="8" r="2" fill="#eee" stroke="#1b62a5"/><path d="M14 10v7" stroke="#1b62a5" stroke-width="2"/></svg>
    <div class="sel1"><svg viewBox="0 0 10 10"><path d="M1 3l4 4 4-4" fill="none" stroke="#aaa"/></svg></div>
    <svg viewBox="0 0 18 18"><path d="M5 2h11l-5 7H8l-5 7" fill="#ddd" stroke="#888"/><path d="M2 16l4-5 4 5z" fill="#999"/></svg><span class="z1">:0</span>
    <svg viewBox="0 0 18 18"><path d="M2.500 2.500h14v14h-14z" fill="#eee" stroke="#222"/><path d="M2.500 4h14M5 8h3M5 12h3M9 8h6M9 11h6M9 14h6" stroke="#222" stroke-width="1.500"/></svg>
    <svg class="s2" viewBox="0 0 18 18"><path d="M8 2h8v14H8z" fill="#bbb" stroke="#888"/><path d="M1 15h4l2-4 4 4" fill="none" stroke="#888" stroke-width="1.500"/></svg>
    <div class="sel2">Main Model<svg viewBox="0 0 10 10"><path d="M1 3l4 4 4-4" fill="none" stroke="#aaa"/></svg></div>
    <div class="sright">
      <svg viewBox="0 0 18 18"><path d="M1 5h15" stroke="#e2b018" stroke-width="4" stroke-dasharray="5 1"/><use href="#ptr" x="6" y="3" width="10" height="15"/></svg>
      <svg viewBox="0 0 18 18"><path d="M1 12l7-8 6 1-4 9z" fill="#bfdcf5" stroke="#1b62a5"/><use href="#redx" x="9" y="1" width="8" height="8"/><use href="#ptr" x="8" y="5" width="8" height="13"/></svg>
      <svg viewBox="0 0 18 18"><path d="M2 2h9v4h1v4H1V6h1zM6 10v6" fill="#f3a06a" stroke="#c64f1e" stroke-width="1.300"/><use href="#ptr" x="8" y="4" width="9" height="14"/></svg>
      <svg viewBox="0 0 18 18"><path d="M2 4l6-2v12l-6 2z" fill="#bfdcf5" stroke="#1b62a5"/><use href="#redx" x="8" y="1" width="8" height="8"/><use href="#ptr" x="8" y="5" width="8" height="13"/></svg>
      <svg viewBox="0 0 18 18"><path d="M6 1v10M1 6h10M4.500 2.500L6 1l1.500 1.500M4.500 9.500L6 11l1.500-1.500M2.500 4.500L1 6l1.500 1.500" fill="none" stroke="#222" stroke-width="1.300"/><use href="#ptr" x="8" y="5" width="8" height="13"/></svg>
      <svg viewBox="0 0 18 18"><circle cx="9" cy="9" r="5.500" fill="none" stroke="#999" stroke-width="3" stroke-dasharray="3 1.300"/></svg>
      <svg viewBox="0 0 18 18"><path d="M1 3h16l-6 7v6l-4-2v-4z" fill="#ddd" stroke="#555" stroke-width="1.300"/></svg><span>:0</span>
    </div>
  </footer>

  <div class="taskbar">
    <svg class="win" viewBox="0 0 24 24"><defs><linearGradient id="wg" x1="0" y1="0" x2="1" y2="1"><stop offset="0" stop-color="#7fe0fb"/><stop offset="1" stop-color="#1a9bf0"/></linearGradient></defs><path d="M0 0h11.300v11.300H0zM12.700 0H24v11.300H12.700zM0 12.700h11.300V24H0zM12.700 12.700H24V24H12.700z" fill="url(#wg)"/></svg>
    <div class="search"><svg viewBox="0 0 18 18"><circle cx="8" cy="7" r="5.500" fill="none" stroke="#eee" stroke-width="1.700"/><path d="M11.500 11l5 5" stroke="#eee" stroke-width="2"/></svg><span>Search</span>
      <svg class="art" viewBox="0 0 46 28"><ellipse cx="23" cy="23" rx="22" ry="4.500" fill="#e8c39a"/><path d="M6 10l14-5 4 13-14 3z" fill="#f2ece6" stroke="#c96"/><path d="M13 13l13-11" stroke="#d2452d" stroke-width="2"/><rect x="29" y="1" width="13" height="21" rx="6.500" fill="#1377e6"/><path d="M31 7h9v7h-9z" fill="#0e55b8"/></svg></div>
    <div class="apps">
      <span><svg viewBox="0 0 28 28"><path d="M9 4h15v15H9z" fill="#f5f5f5"/><path d="M4 9h14v14H4z" fill="#8a8a8a" opacity=".85"/></svg></span>
      <span class="run"><svg viewBox="0 0 28 28"><defs><linearGradient id="ms" x1="0" y1="1" x2="1" y2="0"><stop offset="0" stop-color="#2b7cff"/><stop offset=".6" stop-color="#a34bf5"/><stop offset="1" stop-color="#ff6a7a"/></linearGradient></defs><path d="M5 20l-1 6 6-3z" fill="#3a6cfb"/><circle cx="13.500" cy="14" r="11" fill="url(#ms)"/><path d="M7 17l5-5 3 3 5-4" fill="none" stroke="#fff" stroke-width="2.500"/><circle cx="21.500" cy="5" r="7" fill="#e81123"/><text x="21.500" y="8.500" font-size="9" fill="#fff" text-anchor="middle">3</text></svg></span>
      <span class="run"><svg viewBox="0 0 28 28"><path d="M2 4h9l2 3h13v5H2z" fill="#d99b15"/><path d="M2 9h24v15H2z" fill="#fbcb45"/><path d="M7 18h14v6H7z" fill="#1d78c9"/></svg></span>
      <span class="run"><svg viewBox="0 0 28 28"><circle cx="13" cy="15" r="11" fill="#fbbc05"/><path d="M13 15L3.500 9.500A11 11 0 0124 12z" fill="#ea4335"/><path d="M13 15l-1 11A11 11 0 013.500 9.500z" fill="#34a853"/><circle cx="13" cy="15" r="5.500" fill="#4285f4" stroke="#fff" stroke-width="1.500"/><circle cx="22" cy="6" r="7" fill="#ddd"/><path d="M19 12c0-6 6-6 6 0M20 5a2 2 0 104 0 2 2 0 10-4 0" fill="#555"/></svg></span>
      <span><svg viewBox="0 0 28 28"><path d="M10 7V3.500h8V7" fill="none" stroke="#3aa0e8" stroke-width="2"/><rect x="3" y="7" width="22" height="18" rx="3" fill="#f4f4f4"/><path d="M9 11h4.500v4.500H9z" fill="#f25022"/><path d="M14.500 11H19v4.500h-4.500z" fill="#7fba00"/><path d="M9 16.500h4.500V21H9z" fill="#00a4ef"/><path d="M14.500 16.500H19V21h-4.500z" fill="#ffb900"/></svg></span>
      <span><svg viewBox="0 0 28 28"><circle cx="14" cy="14" r="11.500" fill="#f2f7fd"/><path d="M7 11c3 0 4 6 7 6s4-6 7-6M7 17c3 0 4-6 7-6s4 6 7 6" fill="none" stroke="#3d8de0" stroke-width="1.600"/></svg></span>
      <span class="run"><svg viewBox="0 0 28 28"><circle cx="17" cy="9" r="5" fill="#6a70d8"/><path d="M10 12h15v8a7 7 0 01-14 3z" fill="#6a70d8"/><rect x="2" y="8" width="14" height="14" rx="2" fill="#4449ae"/><text x="9" y="19" font-size="11" font-weight="bold" fill="#fff" text-anchor="middle">T</text><circle cx="22.500" cy="6" r="5.500" fill="#8cc63f"/><path d="M20 6l2 2 3-4" fill="none" stroke="#fff" stroke-width="1.500"/></svg></span>
      <span class="run"><svg viewBox="0 0 28 28"><path d="M2 10l3-2 15 13-2 4zM2 18l3 2L20 7l-2-4z" fill="#1b7fcc"/><path d="M18 2.500l7 3v17l-7 3z" fill="#35a5f2"/></svg></span>
      <span class="run"><svg viewBox="0 0 28 28"><circle cx="14" cy="14" r="9" fill="#8e979f" stroke="#8e979f" stroke-width="5" stroke-dasharray="4.500 2.570"/><circle cx="14" cy="14" r="5" fill="#1c3f66" stroke="#dce6ee" stroke-width="2"/></svg></span>
      <span class="run"><svg viewBox="0 0 28 28"><path d="M3 4h22v20H3z" fill="#d5e8f5"/><path d="M5 22v-5l3-2 2 4 3-10 2 8 3-6 2 5 3-2v8z" fill="#4fa0d6"/></svg></span>
      <span class="run now"><svg viewBox="0 0 28 28"><path d="M5 2h18v24H5z" fill="#0f5fdc"/><path d="M5 19h18v7H5z" fill="#0b3f9c"/><text x="14" y="15" font-size="13" font-weight="bold" fill="#fff" text-anchor="middle">R</text><text x="14" y="24.500" font-size="5" font-weight="bold" fill="#fff" text-anchor="middle">RVT</text></svg></span>
      <span class="run"><svg viewBox="0 0 28 28"><path d="M3 4h22v19H3z" fill="#eee"/><path d="M6 7h10v13H6z" fill="#42806c"/><path d="M18 8h5M18 11h5" stroke="#99a"/><circle cx="21" cy="20" r="5" fill="#fff" stroke="#888"/><circle cx="21" cy="20" r="2.800" fill="#d22"/></svg></span>
    </div>
    <div class="tray">
      <svg viewBox="0 0 18 18"><path d="M4 12l5-5 5 5" fill="none" stroke="#eee" stroke-width="1.700"/></svg>
      <svg viewBox="0 0 18 18"><path d="M4 14a3 3 0 010-6c1-4 7-4 8-1a4 3.500 0 012 7z" fill="#eee"/></svg>
      <span>ISL</span>
      <svg viewBox="0 0 18 18"><g fill="none" stroke="#eee" stroke-width="1.500"><path d="M1.500 7.500a11 11 0 0115 0M4 10.500a7 7 0 0110 0M6.500 13a4 4 0 015 0"/></g><circle cx="9" cy="14.500" r="1.300" fill="#eee"/></svg>
      <svg viewBox="0 0 18 18"><path d="M2 7h3l4-3.500v11L5 11H2zM11.500 6.500a4 4 0 010 5" fill="none" stroke="#eee" stroke-width="1.300"/><path d="M14 4.500a7 7 0 010 9" fill="none" stroke="#667"/></svg>
      <svg viewBox="0 0 18 18"><path d="M2.500 5.500h12v8h-12z" fill="none" stroke="#eee" stroke-width="1.500"/><path d="M5 8h7v3.500H5z" fill="#eee"/><path d="M16.500 8v3" stroke="#eee" stroke-width="2"/><path d="M4 2v6M1 5h6" stroke="#eee" stroke-width="1.500"/></svg>
      <div class="clock">14:08<br>20/11/2023</div>
      <svg viewBox="0 0 18 18"><path d="M3 14V8a6 6 0 0112 0v6l1 1H2z" fill="#63c5f2"/><path d="M7 16h4" stroke="#63c5f2" stroke-width="2"/></svg>
    </div>
  </div>

  <div class="menu">
    <div class="recent"><svg viewBox="0 0 20 20"><path d="M5.500 1.500h7l4 4v12h-8" fill="#eee" stroke="#444"/><circle cx="6.500" cy="12.500" r="4.500" fill="#eee" stroke="#444"/><path d="M6.500 10v2.500h2" fill="none" stroke="#444"/></svg><svg viewBox="0 0 20 20"><path d="M1.500 17V4h5l1 2h8v3M1.500 17l4-8h13l-4 8z" fill="#eee" stroke="#444"/></svg></div>
    <ul class="cmds">
      <li><svg viewBox="0 0 32 32"><defs><linearGradient id="pg" x1="1" y1="0" x2="0" y2="1"><stop offset="0" stop-color="#fff"/><stop offset="1" stop-color="#d0d0da"/></linearGradient></defs><path d="M2.500 4.500h21l7 6v17h-28z" fill="url(#pg)" stroke="#333"/><path d="M23.500 4.500v6h7" fill="#fff" stroke="#333"/></svg>New</li>
      <li><svg viewBox="0 0 32 32"><path d="M2.500 25V6h8l2 3h13v6" fill="#c9ccd0" stroke="#444"/><path d="M2.500 25.500l9-8h19l-9 8z" fill="#e8eaec" stroke="#444"/></svg>Open<b></b></li>
      <li><svg viewBox="0 0 32 32"><use href="#floppy" x="3" y="3" width="26" height="26"/></svg>Save</li>
      <li><svg viewBox="0 0 32 32"><use href="#floppy" x="1" y="6" width="25" height="25"/><use href="#pencil" x="16" y="0" width="16" height="16"/></svg>Save As<b></b></li>
      <li class="hot"><svg viewBox="0 0 32 32"><path d="M2.500 1.500h18l8 8v21h-26z" fill="url(#pg)" stroke="#333"/><path d="M20.500 1.500v8h8" fill="#fff" stroke="#333"/><path d="M15 16.500h10v-4l7 6-7 6v-4H15z" fill="#4c9ae6" stroke="#1b4e8f"/></svg>Export<b></b></li>
      <li><svg viewBox="0 0 32 32"><path d="M7 12V2h14l4 3v7" fill="#fafafa" stroke="#333"/><path d="M1.500 15l3-3h23l3 3v9h-29z" fill="#dcdde0" stroke="#333"/><path d="M2 19h28v5H2z" fill="#5a5e66"/><path d="M8.500 22h15v8h-15z" fill="#b9bcc2" stroke="#333"/></svg>Print<b></b></li>
      <li><svg viewBox="0 0 32 32"><path d="M2.500 3.500h21l7 6v19h-28z" fill="url(#pg)" stroke="#333"/><path d="M23.500 3.500v6h7" fill="#fff" stroke="#333"/><rect x="19" y="18" width="13" height="13" rx="2" fill="#cf2128"/><path d="M22 21l7 7M29 21l-7 7" stroke="#fff" stroke-width="1.700"/></svg>Close</li>
    </ul>
    <div class="sub">
      <h4>Creates exchange files and sets options.</h4>
      <div class="list">
        <div class="e e1"><svg viewBox="0 0 32 32"><path d="M3 0h24v31H3z" fill="#49aaa5"/><path d="M3 22h24v9H3z" fill="#0e5f5d"/><path d="M8 18c2-9 8-12 12-8s-4 9 0 12" fill="none" stroke="#bfe6e2" stroke-width="3"/><text x="15" y="29.500" font-size="7" font-weight="bold" fill="#fff" text-anchor="middle">FBX</text><path d="M13 4h10V0l8 6-8 6V8H13z" fill="#2f74c0" stroke="#143b70"/></svg><p><strong>FBX</strong>Saves a 3D view as an FBX file.</p></div>
        <div class="e e2 dis"><svg viewBox="0 0 32 32"><path d="M2.500 1.500h13v14h-13zM18.500 1.500h8v12h-8zM2.500 18.500h13v8h-13zM17.500 17.500h14v13h-14zM24.500 15v15M18 23.500h13" fill="#eee" stroke="#aaa"/></svg><p><strong>Family Types</strong>Exports family types from the current<br>family to a text (.txt) file.</p></div>
        <div class="e e3"><svg viewBox="0 0 32 32"><path d="M6.500 1.500h17l7 7v21h-24z" fill="#fff" stroke="#222"/><path d="M23.500 1.500v7h7" fill="none" stroke="#222"/><text x="8" y="11" font-size="9.500" font-weight="600">GB</text><text x="8" y="19.500" font-size="8.500" font-weight="600">XML</text><path d="M4 23h10v-3.500l7 5.500-7 5.500V27H4z" fill="#4c9ae6" stroke="#1b4e8f"/></svg><p><strong>gbXML</strong>Saves the model as a gbXML file.</p></div>
        <div class="e e4 hot"><svg viewBox="0 0 32 32"><g fill="none" stroke-width="4.600" stroke-linejoin="round"><path d="M7 15l-4-4 8-9 7 7-7 8" stroke="#17479e"/><path d="M14 15l-1-6 8-7 8 9-8 8-4-4" stroke="#e3174c"/><path d="M18 17l6-1 5 6-8 8-7-7" stroke="#16a39a"/><path d="M8 17l-5 5 8 8 8-7-5-6" stroke="#9c2a93"/></g></svg><p><strong>IFC</strong>Saves an IFC file.</p></div>
        <div class="e e5 dis"><svg viewBox="0 0 32 32"><path d="M4 6v20c0 5 25 5 25 0V6" fill="#eee" stroke="#aaa"/><ellipse cx="16.500" cy="6" rx="12.500" ry="4.500" fill="#f5f5f5" stroke="#aaa"/><path d="M4 16c0 5 25 5 25 0" fill="none" stroke="#aaa"/></svg><p><strong>ODBC Database</strong>Saves model data to an ODBC<br>database.</p></div>
        <div class="e e6"><svg viewBox="0 0 32 32"><path d="M2.500 4v18M20 4v12" stroke="#222"/><path d="M1 3h30M1 22h12" stroke="#222" stroke-width="4"/><path d="M2 3h28M2 22h11" stroke="#fff" stroke-width="1.500" stroke-dasharray="2 2"/><path d="M15.500 17.500h15v14h-15z" fill="#bfe0f2" stroke="#222"/><path d="M16 30l5-7 4 4 3-3 2 6z" fill="#456"/></svg><p><strong>Images and Animations</strong>Saves animations or image files.</p><b></b></div>
      </div>
      <div class="scroll"><i></i></div>
      <div class="foot"><button>Options</button><button>Exit Revit</button></div>
    </div>
  </div>

  <div class="recorder">
    <div class="rt"><svg viewBox="0 0 18 18"><path d="M1 2h14v12H1z" fill="#d9e4e8" stroke="#9aa"/><path d="M3 4h6v8H3z" fill="#4d707c"/><circle cx="14" cy="13" r="3.500" fill="#fff" stroke="#999"/><circle cx="14" cy="13" r="1.800" fill="#d44"/></svg><span>Steps Recorder - Recording Now</span>
      <svg class="wb" viewBox="0 0 120 14"><path d="M6 7h11" stroke="#999"/><path d="M52 2h10v10H52z" fill="none" stroke="#e2e2e2"/><path d="M97 2l10 10M107 2L97 12" stroke="#888" stroke-width="1.200"/></svg></div>
    <div class="rb"><div><svg viewBox="0 0 16 16"><path d="M6 3v11M10 3v11" stroke="#ccc" stroke-width="1.200"/></svg>Pause Record</div><div><svg viewBox="0 0 16 16"><path d="M1.500 1.500h13v13h-13z" fill="none" stroke="#fff" stroke-width="1.500"/><path d="M5 5h6v6H5z" fill="#fff"/></svg>Stop and Review</div><div class="set"><svg viewBox="0 0 16 16"><circle cx="8" cy="8" r="5.500" fill="none" stroke="#888" stroke-width="2" stroke-dasharray="3 1.300"/><circle cx="8" cy="8" r="2" fill="none" stroke="#888"/></svg>Settings</div></div>
  </div>
  <div class="frame"></div>
  <svg class="cursor"><use href="#ptr"/></svg>
</div>
</body>
</html>
```
FILE: styles.css
```css
* { box-sizing: border-box; }
body { margin: 0; background: #000; font: 12px/15px "Open Sans", "Noto Sans", sans-serif; letter-spacing: -.2px; color: #2b2b2b; overflow: hidden; }
svg { display: block; flex: none; overflow: visible; }
svg text { letter-spacing: 0; }
.defs { position: absolute; }
.screen { position: relative; width: 1919px; height: 1200px; padding-top: 65px; display: flex; flex-direction: column; white-space: nowrap; }
i { font-style: normal; }

/* title bar */
.title { height: 29px; background: #cdcdcd; display: grid; grid-template-columns: 941px 615px 1fr; align-items: start; flex: none; }
.qat { display: grid; grid-template-columns: 24px 28px 25px 24px 24px 12px 24px 12px 24px 12px 25px 30px 31px 24px 12px 24px 24px 31px 25px 10px 25px 31px 25px 21px 13px 20px; padding-top: 1px; align-items: center; }
.qat svg { width: 22px; height: 22px; }
.qat .logo { width: 20px; }
.qat .on { width: 24px; }
.qat .q { width: 16px; }
.qat .cr, .tools .cr { width: 8px; height: 8px; }
.wtitle { padding-top: 2px; letter-spacing: -.25px; color: #3c3c3c; }
.tools { display: grid; grid-template-columns: 19px 24px 24px 83px 15px 35px 25px 65px 25px 25px 22px; align-items: center; padding-top: 1px; }
.tools svg { width: 22px; height: 22px; }
.tools span { letter-spacing: -.7px; }

/* ribbon tabs */
.tabs { height: 20px; flex: none; background: #cdcdcd; display: grid; grid-template-columns: 47px 93px 68px 45px 58px 63px 50px 69px 62px 98px 81px 45px 63px 62px 51px 154px 69px 30px; line-height: 20px; align-items: center; letter-spacing: -.22px; }
.tabs .file { background: #77bff8; color: #fff; padding-left: 13px; height: 20px; }
.tabs .act { background: #f3f3f3; width: 83px; padding-left: 9px; height: 20px; }
.tabs .bim { letter-spacing: -.38px; }

/* ribbon */
.ribbon { height: 96px; flex: none; background: #ededed; border-top: 4px solid #f4f4f4; border-bottom: 1px solid #c4c4c4; display: flex; }
.panel { border-right: 1px solid #dcdcdc; display: flex; flex-direction: column; justify-content: space-between; }
.items { display: grid; height: 71px; }
.it { width: 60px; text-align: center; position: relative; padding-top: 2px; }
.it svg { width: 30px; height: 30px; margin: 0 auto 5px; }
.off { color: #b4b4b4; }
.dn { display: inline-block; border: 3px solid transparent; border-top-color: #222; vertical-align: 4px; }
.sd { position: absolute; right: 5px; top: 52px; border: 3px solid transparent; border-top-color: #222; }
.ptitle { height: 20px; padding-top: 2px; text-align: center; display: flex; justify-content: center; align-items: flex-start; gap: 4px; }
.ptitle svg { margin-top: 4px; }
.p0 { width: 625px; padding-left: 428px; } .p0 .items { grid-template-columns: 48.5px 45px 45.5px 60px; }
.p1 { width: 139px; } .p1 .items { padding-left: 1px; grid-template-columns: 48px 37px 60px; }
.p2 { width: 135px; } .p2 .items { margin-left: -7px; grid-template-columns: 40px 47.5px 60px; }
.p3 { width: 304px; } .p3 .items { margin-left: -5px; grid-template-columns: 47px 55px 49px 49.5px 51.5px 60px; }
.p4 { width: 209px; } .p4 .items { margin-left: -9.5px; grid-template-columns: 37.5px 39px 41px 45px 60px; }
.p5 { width: 81px; } .p5 .items { margin-left: -9px; grid-template-columns: 39px 60px; }
.p6 { width: 164px; border: 0; } .p6 .items { margin-left: -7px; grid-template-columns: 40px 37.5px 38.5px 60px; }
.options { height: 26px; flex: none; background: #ededed; border-top: 3px solid #f8f8f8; box-shadow: inset 0 1px #d8d8d8; }

/* properties palette */
.main { height: 837px; flex: none; display: grid; grid-template-columns: 220px 1403px 296px; background: #fff; }
.props { border-right: 3px solid #cfcfcf; background: #fff; display: flex; flex-direction: column; color: #111; letter-spacing: -.2px; }
.fill { height: 335px; flex: none; }
.ph { height: 18px; flex: none; background: #dbdbdb; padding: 1px 6px 0 2px; width: 217px; display: flex; justify-content: space-between; }
.ph svg { width: 8px; height: 9px; margin-top: 3px; }
.pr { height: 18px; flex: none; width: 216px; display: grid; grid-template-columns: 103px 101px 12px; border-bottom: 1px dotted #555; line-height: 16px; }
.pr span { border-right: 1px dotted #888; padding-left: 8px; }
.pr span + span { padding-left: 2px; }
.dim { color: #8a8a8a; }
.tight { letter-spacing: -.35px; }
.cb { display: block; width: 13px; height: 13px; border: 1px solid #777; border-radius: 3px; margin: 3px 0 0 1px; background: #fafafa; }
.dim .cb { border-color: #ccc; }
.btn { display: block; border: 1px solid #ddd; border-bottom-color: #aaa; height: 17px; text-align: center; line-height: 16px; margin-right: 2px; }
.pfoot { margin-top: auto; height: 28px; background: #f0f0f0; display: flex; justify-content: space-between; align-items: flex-start; padding: 4px 5px 0 2px; line-height: 20px; }
.pfoot a { color: #1560c4; text-decoration: underline; letter-spacing: -.45px; }
.pfoot span { background: #fafafa; width: 69px; text-align: center; color: #999; letter-spacing: 0; }

/* drawing view */
.view { display: flex; flex-direction: column; min-width: 0; }
.vtabs { height: 22px; flex: none; background: #cacaca; display: flex; color: #444; }
.vtabs div { width: 128px; padding-left: 4px; display: flex; align-items: center; gap: 7px; padding-top: 3px; }
.vtabs div svg { width: 16px; height: 16px; }
.vtabs div.cur { width: 257px; background: #fafafa; padding-left: 241px; }
.vtabs div.cur svg { width: 11px; height: 11px; }
.vtabs .more { width: 10px; height: 10px; margin: 9px 0 0 361px; }
.canvas { background: #fff; }
.vbar { height: 19px; flex: none; background: #f0f0f0; border-bottom: 1px solid #fff; display: flex; align-items: center; margin-left: 2px; gap: 3px; padding: 0 0 2px 24px; }
.vbar span { width: 51px; color: #222; letter-spacing: -.4px; }
.vbar svg { width: 18px; height: 15px; }
.dash { width: 17px; height: 2px; background: #777; margin-left: 495px; }
.vbar .grip { width: 10px; height: 10px; margin: 5px 6px 0 auto; }

/* project browser */
.browser { background: #fff; letter-spacing: -.2px; color: #222; }
.bh { height: 22px; background: #ededed; display: flex; justify-content: space-between; align-items: center; padding: 3px 3px 0 4px; letter-spacing: -.25px; }
.bh svg { width: 11px; height: 11px; }
.tree { padding-left: 6px; background: repeating-linear-gradient(#aaa 0 1px, transparent 1px 2px) 10px 12px / 1px 430px no-repeat; }
.r { height: 18px; display: flex; align-items: center; }
.r .t { width: 9px; height: 9px; margin-top: 1px; }
.r .ic { width: 16px; height: 16px; }
.a .t { margin-right: 6px; }
.a i.t { background: repeating-linear-gradient(90deg, #aaa 0 1px, transparent 1px 2px) 4px 4px / 10px 1px no-repeat; }
.a .ic { margin-right: 7px; }
.b, .c { margin-left: 5px; }
.b { padding-left: 15px; background: repeating-linear-gradient(90deg, #aaa 0 1px, transparent 1px 2px) 24px 9px / 9px 1px no-repeat; }
.b .t { margin-right: 13px; }
.c { padding-left: 20px; background: repeating-linear-gradient(#aaa 0 1px, transparent 1px 2px) 19px 0 / 1px 18px no-repeat, repeating-linear-gradient(#aaa 0 1px, transparent 1px 2px) 39px 0 / 1px 18px no-repeat, repeating-linear-gradient(90deg, #aaa 0 1px, transparent 1px 2px) 39px 9px / 10px 1px no-repeat; }
.c.end { background-size: 1px 18px, 1px 10px, 10px 1px; }
.c .ic { margin: 0 3px 0 31px; }
.c span { padding: 0 2px; }
.sel { background: #dcdcdc; }

/* status bar */
.status { height: 24px; flex: none; background: #cbcbcb; display: flex; align-items: center; color: #222; padding-top: 1px; }
.status > svg, .sright svg { width: 18px; height: 18px; }
.msg { width: 894px; padding-left: 1px; letter-spacing: -.34px; }
.sel1, .sel2 { background: #fff; height: 18px; margin-left: 7px; width: 204px; display: flex; align-items: center; padding-right: 3px; color: #777; justify-content: flex-end; }
.sel1 svg, .sel2 svg { width: 10px; height: 10px; }
.status .sel1 + svg { margin-left: 8px; }
.z1 { width: 35px; padding-left: 2px; }
.status .s2 { margin-left: 7px; }
.sel2 { justify-content: space-between; padding-left: 3px; letter-spacing: 0; }
.sright { margin-left: 228px; display: flex; gap: 8px; align-items: center; }
.sright span { margin-left: -7px; color: #555; }

/* taskbar */
.taskbar { height: 48px; flex: none; background: linear-gradient(90deg, #202427 0, #202427 25%, #142631 34%, #142631 70%, #1f2427 78%); display: flex; align-items: center; color: #eee; padding-left: 572px; }
.win { width: 24px; height: 24px; }
.search { width: 219px; height: 33px; border-radius: 17px; background: #33434e; border: 1px solid #46555f; margin-left: 12px; display: flex; align-items: center; padding: 0 4px 0 10px; font-size: 14px; color: #dbe0e4; letter-spacing: -.5px; }
.search > svg { width: 18px; height: 18px; margin-right: 8px; }
.search .art { width: 44px; height: 28px; margin: 0 0 0 auto; }
.apps { display: flex; margin-left: 4px; }
.apps span { width: 43.9px; height: 48px; display: flex; justify-content: center; align-items: center; position: relative; }
.apps svg { width: 27px; height: 27px; }
.run::after { content: ""; position: absolute; bottom: 5px; width: 6px; height: 3px; border-radius: 2px; background: #9aa4aa; }
.now { background: linear-gradient(#253743, #253743) 2px 4px / 40px 40px no-repeat; }
.now::after { width: 16px; background: #62b8ee; }
.tray { display: grid; grid-template-columns: 31px 38px 38px 21px 28px 18px 76px 20px; margin-left: 268px; align-items: center; }
.tray svg { width: 18px; height: 18px; }
.clock { text-align: right; line-height: 16px; letter-spacing: -.1px; }
.tray > svg:last-child { margin-left: 6px; }

/* application menu */
.menu { position: absolute; left: 0; top: 114px; width: 423px; height: 467px; border: 1px solid #a99bb0; border-width: 0 1px 1px 0; background: #f0f0f0; display: grid; grid-template-columns: 142px 1fr; grid-template-rows: 467px; color: #222; overflow: hidden; }
.menu::before { content: ""; position: absolute; left: 0; top: 0; width: 142px; height: 467px; background: linear-gradient(90deg, #dcdcdc, #d0d0d1 80%, #c4c4c4); }
.recent { position: absolute; left: 91px; top: 8px; display: flex; gap: 2px; }
.recent svg { width: 20px; height: 20px; outline: 1px solid #aaa; }
.cmds { position: relative; list-style: none; margin: 0; padding: 39.5px 0 0; width: 139px; letter-spacing: -.3px; }
.cmds li { height: 53px; display: flex; align-items: center; padding-left: 15px; gap: 6px; position: relative; }
.cmds svg { width: 32px; height: 32px; }
.cmds b { position: absolute; right: 13px; border: 4px solid transparent; border-left-color: #222; border-right-width: 0; }
.cmds .hot { border: 1px solid #3f79b4; background: linear-gradient(#c3dcf3, #abcfee); padding-left: 13px; margin-left: 1px; height: 52px; }
.cmds li:nth-child(6) { height: 59px; border-bottom: 1px solid #b0b0b0; padding-top: 2px; }
.cmds li:nth-child(7) { height: 55px; }
.sub { position: relative; display: flex; flex-direction: column; }
.sub::before { content: ""; position: absolute; left: -4px; top: 6px; width: 272px; height: 409px; background: #fff; }
.sub > * { position: relative; }
h4 { margin: 0; padding: 18px 0 0 7px; font-size: 11.5px; letter-spacing: -.54px; height: 78px; color: #111; }
.list { height: 327px; overflow: hidden; margin-left: -2px; width: 269px; letter-spacing: -.27px; }
.e { display: flex; padding-left: 15px; position: relative; }
.e svg { width: 32px; height: 32px; margin-right: 10px; }
.e p { margin: 0; line-height: 13px; font-size: 11.5px; color: #111; }
.e strong { display: block; height: 16px; font-size: 11.5px; font-weight: 600; letter-spacing: -.33px; }
.dis p, .dis strong { color: #777; }
.dis p { letter-spacing: -.35px; }
.dis strong { height: 13px; }
.e1 { height: 67px; padding-top: 13px; }
.e2 { height: 61px; }
.e2 svg { margin-top: 2px; }
.e3 { height: 43px; }
.e4 { height: 54px; border: 1px solid #3f79b4; background: linear-gradient(#bfd9f2, #a9cdee); padding: 10px 0 0 14px; }
.e5 { height: 62px; padding-top: 11px; }
.e5 svg { margin-top: 4px; }
.e6 { height: 50px; padding-top: 10px; }
.e6 b { position: absolute; right: 14px; top: 22px; border: 4px solid transparent; border-left-color: #222; border-right-width: 0; }
.scroll { height: 9px; background: #d6d6d6; border-top: 1px solid #999; margin-left: -2px; width: 269px; display: flex; justify-content: center; }
.scroll i { margin-top: 3px; border: 4px solid transparent; border-top-color: #222; border-bottom: 0; height: 0; }
.foot { display: flex; gap: 21px; padding: 17px 0 0 135px; }
.foot button { font: inherit; letter-spacing: -.1px; height: 23px; border: 1px solid #888; background: #f4f4f4; padding: 0; width: 52px; color: #222; }
.foot button + button { width: 56px; }

/* steps recorder window */
.recorder { position: absolute; left: 87px; top: 146px; width: 385px; height: 60px; border-radius: 8px; overflow: hidden; box-shadow: 0 8px 22px 4px rgba(0,0,0,.35); background: #000; }
.rt { height: 30px; background: #f5f5f5; display: flex; align-items: center; padding-left: 7px; color: #959595; letter-spacing: -.28px; }
.rt svg { width: 18px; height: 18px; margin-right: 5px; }
.rt .wb { width: 120px; height: 14px; margin: 0 5px 0 auto; }
.rb { height: 30px; display: grid; grid-template-columns: 129px 130px 126px; color: #f5f5f5; line-height: 31px; letter-spacing: -.35px; }
.rb div { display: flex; align-items: center; gap: 9px; padding-left: 15px; }
.rb div + div { padding-left: 7px; gap: 9px; }
.rb svg { width: 16px; height: 16px; }
.rb .set { background: #2e2e2e; color: #7b7b7b; padding-left: 29px; gap: 8px; letter-spacing: -.1px; }
.frame { position: absolute; left: 132px; top: 116px; width: 284px; height: 418px; border: 6.5px solid #0cf31f; }
.cursor { position: absolute; left: 236px; top: 389px; width: 12px; height: 18px; }
```
